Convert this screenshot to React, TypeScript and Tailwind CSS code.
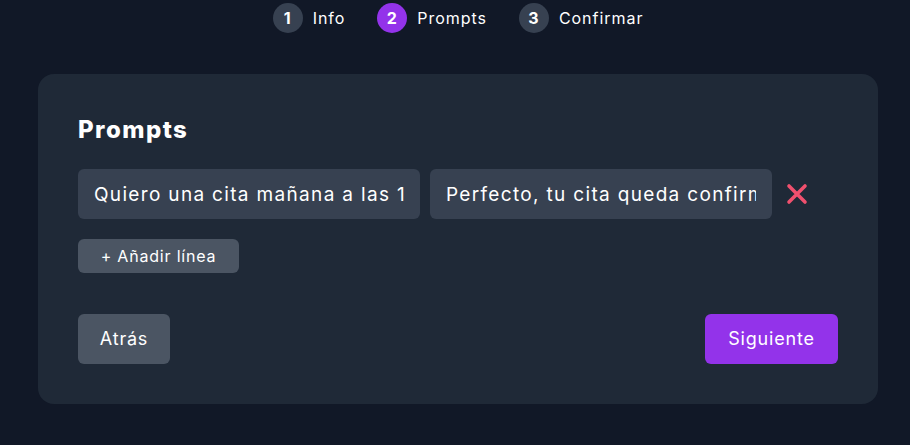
import React from 'react';

const steps = [
  { n: 1, label: 'Info' },
  { n: 2, label: 'Prompts' },
  { n: 3, label: 'Confirmar' },
];

const Stepper: React.FC<{ current: number }> = ({ current }) => (
  <div className="flex items-center justify-center gap-[32px]">
    {steps.map((s) => (
      <div key={s.n} className="flex items-center gap-[10px]">
        <div
          className={
            'flex h-[30px] w-[30px] items-center justify-center rounded-full text-base font-bold text-white ' +
            (s.n === current ? 'bg-[#9333ea]' : 'bg-[#374151]')
          }
        >
          {s.n}
        </div>
        <span className="text-base tracking-[0.06em] text-white">{s.label}</span>
      </div>
    ))}
  </div>
);

export default function App() {
  const [rows, setRows] = React.useState([
    {
      user: 'Quiero una cita mañana a las 10',
      bot: 'Perfecto, tu cita queda confirmada para mañana a las 10',
    },
  ]);

  return (
    <div
      className="min-h-screen bg-[#111827] pt-[3px] tracking-[0.05em] text-white"
      style={{ fontFamily: 'Inter, "Noto Sans", sans-serif' }}
    >
      <div className="ml-[38px] w-[840px]">
        <Stepper current={2} />

        <div className="mt-[41px] rounded-2xl bg-[#1f2937] p-10">
          <h2 className="mb-[23px] text-2xl font-extrabold tracking-[0.06em]">Prompts</h2>

          <div className="flex flex-col gap-3">
            {rows.map((r, i) => (
              <div key={i} className="flex items-center gap-[10px]">
                <input
                  readOnly
                  value={r.user}
                  className="h-[50px] w-[342px] rounded-md bg-[#374151] px-4 text-[19px] tracking-[0.07em] text-white outline-none"
                />
                <input
                  readOnly
                  value={r.bot}
                  className="h-[50px] w-[342px] rounded-md bg-[#374151] px-4 text-[19px] tracking-[0.07em] text-white outline-none"
                />
                <button
                  className="ml-[3px] text-[#f0506e]"
                  onClick={() => setRows(rows.filter((_, j) => j !== i))}
                >
                  <svg width="24" height="24" viewBox="0 0 24 24" fill="none">
                    <path
                      d="M4 4L20 20M20 4L4 20"
                      stroke="currentColor"
                      strokeWidth="3.6"
                      strokeLinecap="round"
                    />
                  </svg>
                </button>
              </div>
            ))}
          </div>

          <button
            className="mt-5 h-[34px] w-[161px] rounded-md bg-[#4b5563] text-base text-white"
            onClick={() => setRows([...rows, { user: '', bot: '' }])}
          >
            + Añadir línea
          </button>

          <div className="mt-[41px] flex items-center justify-between">
            <button className="h-[50px] w-[92px] rounded-md bg-[#4b5563] text-lg text-white">
              Atrás
            </button>
            <button className="h-[50px] w-[133px] rounded-md bg-[#9333ea] text-lg text-white">
              Siguiente
            </button>
          </div>
        </div>
      </div>
    </div>
  );
}
